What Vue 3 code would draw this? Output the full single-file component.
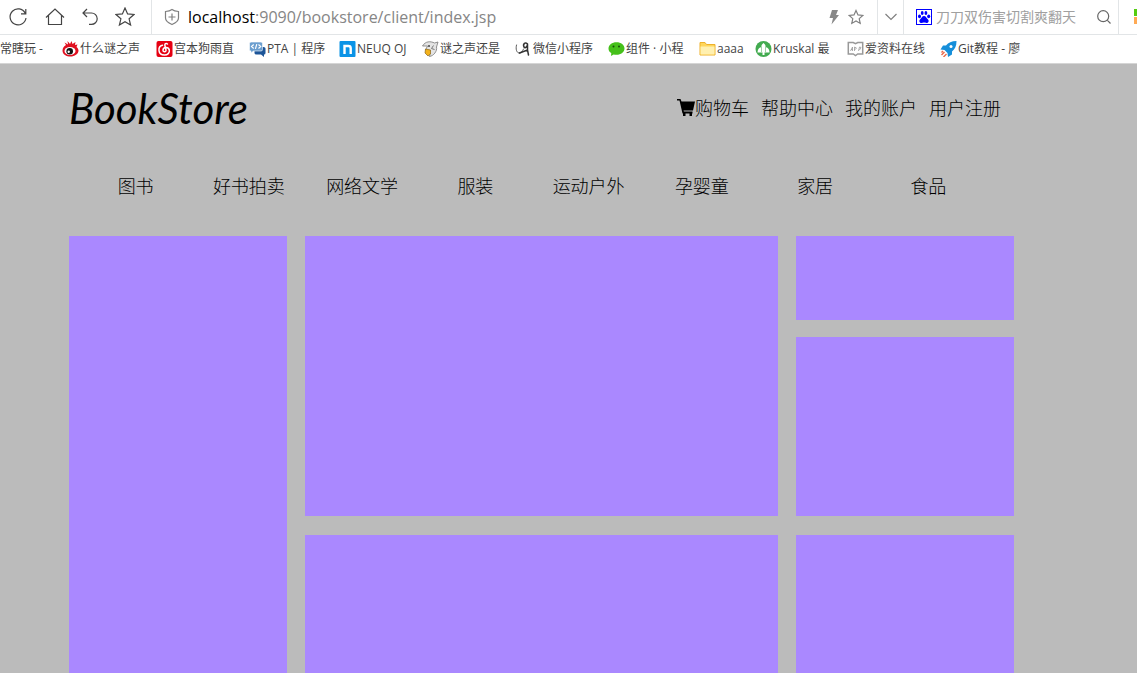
<script setup>
import { ref } from 'vue'

const keyword = ref('')

const bookmarks = [
  { icon: 'none', label: '常瞎玩 -' },
  { icon: 'weibo', label: '什么谜之声' },
  { icon: 'netease', label: '宫本狗雨直' },
  { icon: 'pta', label: 'PTA | 程序' },
  { icon: 'neuq', label: 'NEUQ OJ' },
  { icon: 'bird', label: '谜之声还是' },
  { icon: 'mini', label: '微信小程序' },
  { icon: 'wechat', label: '组件 · 小程' },
  { icon: 'folder', label: 'aaaa' },
  { icon: 'tree', label: 'Kruskal 最' },
  { icon: 'book', label: '爱资料在线' },
  { icon: 'rocket', label: 'Git教程 - 廖' },
]

const accountLinks = ['帮助中心', '我的账户', '用户注册']
const categories = ['图书', '好书拍卖', '网络文学', '服装', '运动户外', '孕婴童', '家居', '食品']
</script>

<template>
  <div class="window">
    <div class="toolbar">
      <div class="controls">
        <button type="button" aria-label="刷新">
          <svg width="20" height="20" viewBox="0 0 20 20"><path d="M17.2 6.2A8 8 0 1 0 18 11M17.8 2v4.8h-4.8" /></svg>
        </button>
        <button type="button" aria-label="主页">
          <svg width="20" height="20" viewBox="0 0 20 20"><path d="M1 10.500 10 2l9 8.500M3.500 8.500v9h13v-9" /></svg>
        </button>
        <button type="button" aria-label="后退">
          <svg width="16" height="20" viewBox="0 0 16 20"><path d="M5 2 1 6l4 4M1 6h8.500a5.700 5.700 0 0 1 0 11.400H7" /></svg>
        </button>
        <button type="button" aria-label="收藏夹">
          <svg width="20" height="20" viewBox="0 0 20 20"><path d="m10 1 2.600 5.900 6.400.600-4.900 4.300L15.600 18 10 14.700 4.400 18l1.500-6.200L1 7.500l6.400-.6z" /></svg>
        </button>
      </div>
      <div class="address">
        <svg class="shield" width="16" height="18" viewBox="0 0 16 18"><path d="M8 1.500C6 3 4 3.300 1.500 3.500V10c0 3 3 5 6.500 6.500 3.500-1.500 6.500-3.500 6.500-6.500V3.500C12 3.300 10 3 8 1.500zM8 5.500v7M4.500 9h7" /></svg>
        <div class="url" role="textbox" aria-label="地址" contenteditable="true" spellcheck="false"><b>localhost</b>:9090/bookstore/client/index.jsp</div>
        <button type="button" aria-label="极速模式">
          <svg class="bolt" width="12" height="16" viewBox="0 0 12 16"><path d="M4 1h6L8 6h3L3.500 15.500 5 9H1.500z" /></svg>
        </button>
        <button type="button" aria-label="收藏">
          <svg class="gray" width="16" height="16" viewBox="0 0 16 16"><path d="m8 1.500 2 4.400 4.800.500-3.600 3.200 1 4.800L8 12l-4.200 2.400 1-4.800L1.200 6.400 6 5.900z" /></svg>
        </button>
      </div>
      <button class="more" type="button" aria-label="展开">
        <svg class="gray" width="14" height="10" viewBox="0 0 14 10"><path d="m1.500 2 5.500 5.500L12.500 2" /></svg>
      </button>
      <form class="search" @submit.prevent>
        <svg class="paw" width="16" height="16" viewBox="0 0 16 16">
          <path fill="#00f" d="M0 0h16v16H0z" />
          <path fill="#fff" d="M1 1h14v14H1z" />
          <g fill="#00f">
            <ellipse cx="3.500" cy="7.300" rx="1.500" ry="1.900" /><ellipse cx="6.200" cy="3.900" rx="1.400" ry="2" />
            <ellipse cx="9.900" cy="3.900" rx="1.400" ry="2" /><ellipse cx="12.700" cy="7.300" rx="1.500" ry="1.900" />
            <path d="M8 7c2 0 2.400 2 3.800 3.200C13.600 12 12.300 14 10.500 14 9 14 9 13.600 8 13.600S7 14 5.500 14c-1.800 0-3.100-2-1.300-3.800C5.600 9 6 7 8 7z" />
          </g>
        </svg>
        <input v-model="keyword" type="text" aria-label="搜索" placeholder="刀刀双伤害切割爽翻天" />
        <button type="submit" aria-label="搜索">
          <svg class="lens" width="16" height="16" viewBox="0 0 16 16"><path d="M12.700 7.200A5.500 5.500 0 1 1 1.700 7.200a5.500 5.500 0 0 1 11 0zM11.200 11.200l3.300 3.300" /></svg>
        </button>
      </form>
      <div class="apps">
        <svg width="4" height="16" viewBox="0 0 4 16"><path fill="#5c1" d="M1 0h3v7H1z" /><path fill="#fa5" d="M1 8h3v7H1z" /></svg>
      </div>
    </div>

    <nav class="bookmarks" aria-label="书签">
      <a v-for="item in bookmarks" :key="item.label" href="#">
        <svg v-if="item.icon !== 'none'" width="17" height="16" viewBox="0 0 16 16">
          <g v-if="item.icon === 'weibo'">
            <path fill="#e01020" d="M0 9.500C0 7 1.500 5 3.500 4L2 1.500l3.500 2L5 0l2.500 3L9 0l1 3 3-2-.5 3 2.500-.5-1 2.500c1.300 1 2 2.500 2 3.500 0 3.500-4 6-8 6s-8-2-8-6z" />
            <ellipse cx="7.500" cy="10" rx="5.500" ry="4" fill="#fff" /><circle cx="7.200" cy="10.200" r="3.300" fill="#111" /><circle cx="6.200" cy="10.800" r="1.200" fill="#fff" />
          </g>
          <g v-else-if="item.icon === 'netease'">
            <rect width="16" height="16" rx="2" fill="#e60012" />
            <path fill="none" stroke="#fff" stroke-width="1.500" stroke-linecap="round" d="M11 3C9.500 1.800 8 3 8.400 4.500L9.500 9c.4 2-3 2.500-3 .2C6.500 6 12 5.500 12.800 9c.7 3-1.800 5-4.800 5-7 0-7-8.500-2-9.700" />
          </g>
          <g v-else-if="item.icon === 'pta'">
            <path fill="#1d5598" d="M5 6h9q2 0 2 1.500V12q0 1.500-1.500 1.500V16l-3-2.500H7q-2 0-2-1.500z" />
            <path fill="#6c9fcf" stroke="#fff" stroke-width=".6" d="M0 2.500Q0 1 1.500 1h10Q13 1 13 2.500v6q0 1.500-1.500 1.500H4l-2.500 2V10Q0 10 0 8.500z" />
            <path fill="none" stroke="#fff" stroke-width="1.200" d="M4.200 3.500 2 5.500l2.200 2M7.300 3.200l-1.400 4.600M9 3.500l2.200 2-2.200 2" />
          </g>
          <g v-else-if="item.icon === 'neuq'">
            <rect width="16" height="16" rx="1" fill="#0b93e6" /><path fill="none" stroke="#fff" stroke-width="2.400" d="M5 13V5h4q2.200 0 2.200 2.200V13" />
          </g>
          <g v-else-if="item.icon === 'bird'">
            <path fill="#e4e4e4" stroke="#777" stroke-width=".8" d="M0 5c3-5 8-5 12-3l3.500-1L14 6c1 4-3 9-7 9.500C8 12 6.500 9 3 9l2-4z" />
            <path fill="#f4b21b" stroke="#8a651a" stroke-width=".7" d="m3 8 5 1v4l-2.500 2L2.500 12z" /><circle cx="6.500" cy="5" r="1" fill="#444" /><path fill="none" stroke="#777" d="m11 4.500-2 3 3 1" />
          </g>
          <g v-else-if="item.icon === 'mini'" fill="none" stroke="#333" stroke-linecap="round">
            <path stroke-width=".8" d="M1 4c-1 4 0 8 3 8 2 0 3-2 4-4" /><path stroke-width="1.500" d="M12 3C10 .5 7 3 8.500 6c1.200 1.800 3.500-.5 3.500-3v7.500M4 12l8-3 1 5" />
          </g>
          <g v-else-if="item.icon === 'wechat'">
            <path fill="#45c01a" d="M8 1.200c4.500 0 8 2.700 8 6.300s-3.500 6.300-8 6.300c-1 0-2-.1-2.900-.4L2.500 15l.3-2.900C1 11 0 9.500 0 7.500c0-3.600 3.500-6.300 8-6.300z" /><circle cx="5" cy="5.500" r="1" fill="#174d0a" /><circle cx="10.500" cy="5.500" r="1" fill="#174d0a" />
          </g>
          <g v-else-if="item.icon === 'folder'">
            <path fill="#ffd65a" stroke="#eeb12b" d="M.5 1.500h5l1.500 2h8.500v10.500H.5z" /><path fill="#fff0b0" d="M1 5.500h14v8H1z" />
          </g>
          <g v-else-if="item.icon === 'tree'">
            <circle cx="8" cy="8" r="8" fill="#43ab50" /><path fill="#fff" d="M8 2c2 1.500 2.200 3 2 4 3 .5 4 3 4 5.500H9V14H7v-2.500H2C2 9 3 6.500 6 6c-.2-1 0-2.500 2-4z" /><path stroke="#9bd3a2" fill="none" d="M6 6v5.500M10 6v5.500" />
          </g>
          <g v-else-if="item.icon === 'book'" fill="none" stroke="#999">
            <path stroke-width="1.500" d="M.8 1.500h5L8 2.700l2.200-1.200h5v11.500h-5L8 14.500 5.800 13h-5z" /><path stroke-width=".8" d="m3 10 2-4v4M7 10V6l2 1-2 2M11 10l1-4 1.500.5L12 9M3.500 8.500H5" />
          </g>
          <g v-else>
            <path fill="#168fda" d="M16 0c-5 0-8 1.500-10.500 4.500H2.500L0 8.500l4 .5 3 3 .5 4 4-2.500v-3C14.500 8 16 5 16 0z" /><circle cx="10.500" cy="5.500" r="1.500" fill="#fff" />
            <path stroke="#ea6749" stroke-width="1.400" d="m1 14 3-3M3 16l3-3M1 11.500 2.500 10" />
          </g>
        </svg>
        <span>{{ item.label }}</span>
      </a>
    </nav>

    <div class="store">
      <header>
        <h1>BookStore</h1>
        <nav class="account" aria-label="账户">
          <a href="#" class="cart">
            <svg width="18" height="18" viewBox="0 0 18 18"><path d="M0 0h3.500l1 2.500H18L16 11.500H6.500l.4 1h8.600v2h-.5V17h-2.500v-2.500H8.500V17H6v-2.500h-.5L2.500 1.500H0z" /></svg>购物车
          </a>
          <a v-for="link in accountLinks" :key="link" href="#">{{ link }}</a>
        </nav>
      </header>
      <nav class="categories" aria-label="商品分类">
        <a v-for="name in categories" :key="name" href="#">{{ name }}</a>
      </nav>
      <main>
        <section class="panel"></section>
        <div class="column">
          <section class="panel banner"></section>
          <section class="panel rest"></section>
        </div>
        <div class="column">
          <div class="pair">
            <section class="panel notice"></section>
            <section class="panel tall"></section>
          </div>
          <section class="panel rest"></section>
        </div>
      </main>
    </div>
  </div>
</template>

<style>
body {
  margin: 0;
  background: #bbb;
}
</style>

<style scoped>
* {
  box-sizing: border-box;
}
.window {
  display: flex;
  flex-direction: column;
  min-height: 100vh;
  font-family: "Open Sans", "Noto Sans CJK SC", sans-serif;
}
a {
  color: inherit;
  text-decoration: none;
}
button {
  display: flex;
  align-items: center;
  justify-content: center;
  padding: 0;
  border: 0;
  background: none;
}
svg {
  flex: none;
}
.toolbar {
  display: grid;
  grid-template-columns: 152px 1fr 26px 215px 18px;
  height: 35px;
  border-bottom: 1px solid #e2e5e7;
  background: #fff;
}
.toolbar > * {
  border-right: 1px solid #e2e5e7;
}
.controls {
  display: flex;
  justify-content: space-between;
  align-items: center;
  padding: 0 16px 0 8px;
}
.controls svg,
.gray,
.lens,
.shield {
  fill: none;
  stroke: #444;
  stroke-width: 1.2;
}
.address {
  display: flex;
  align-items: center;
  gap: 8px;
  padding: 0 13px 0 12px;
}
.address .shield,
.gray {
  stroke: #808080;
}
.search .lens {
  stroke: #666;
}
.bolt {
  fill: #888;
}
.url {
  flex: 1;
  font-size: 16px;
  line-height: 24px;
  color: #868686;
  white-space: nowrap;
  outline: 0;
}
.url b {
  font-weight: 400;
  color: #000;
}
.search {
  display: flex;
  align-items: center;
  gap: 4px;
  padding: 0 6px 0 12px;
}
.search input {
  flex: 1;
  min-width: 0;
  padding: 0;
  border: 0;
  outline: 0;
  font: 14px/20px "Open Sans", "Noto Sans CJK SC", sans-serif;
}
.search input::placeholder {
  color: #a0a0a0;
}
.toolbar .apps {
  display: flex;
  align-items: center;
  justify-content: flex-end;
  border-right: 0;
}
.bookmarks {
  display: grid;
  grid-template-columns: 62px 94px 93px 90px 83px 93px 93px 91px 56px 92px 93px 1fr;
  height: 29px;
  border-bottom: 1px solid #d5d5d5;
  background: #fff;
  font-size: 12px;
  line-height: 18px;
  color: #444;
}
.bookmarks a {
  display: flex;
  gap: 1px;
  align-items: center;
  white-space: nowrap;
}
.store {
  display: flex;
  flex: 1;
  flex-direction: column;
  padding: 0 123px 0 69px;
  background: #bbb;
  color: #000;
  font-size: 18px;
  font-weight: 300;
  line-height: 26px;
}
header {
  display: flex;
  align-items: center;
  justify-content: space-between;
  height: 88px;
}
h1 {
  margin: 0;
  font: italic 400 42px/48px Lato, sans-serif;
}
.account {
  display: flex;
  gap: 12px;
  padding-right: 13px;
}
.cart {
  display: flex;
  align-items: center;
}
.categories {
  display: grid;
  grid-template-columns: repeat(8, 1fr);
  align-items: center;
  height: 68px;
  padding: 0 29px 0 10px;
  text-align: center;
}
main {
  display: grid;
  flex: 1;
  grid-template-columns: 6fr 13fr 6fr;
  gap: 18px;
  margin-top: 16px;
}
.panel {
  background: #a8f;
}
.column {
  display: flex;
  flex-direction: column;
  gap: 19px;
}
.pair {
  display: flex;
  flex-direction: column;
  gap: 17px;
}
.banner {
  height: 280px;
}
.notice {
  height: 84px;
}
.tall {
  height: 179px;
}
.rest {
  flex: 1;
  min-height: 138px;
}
</style>
